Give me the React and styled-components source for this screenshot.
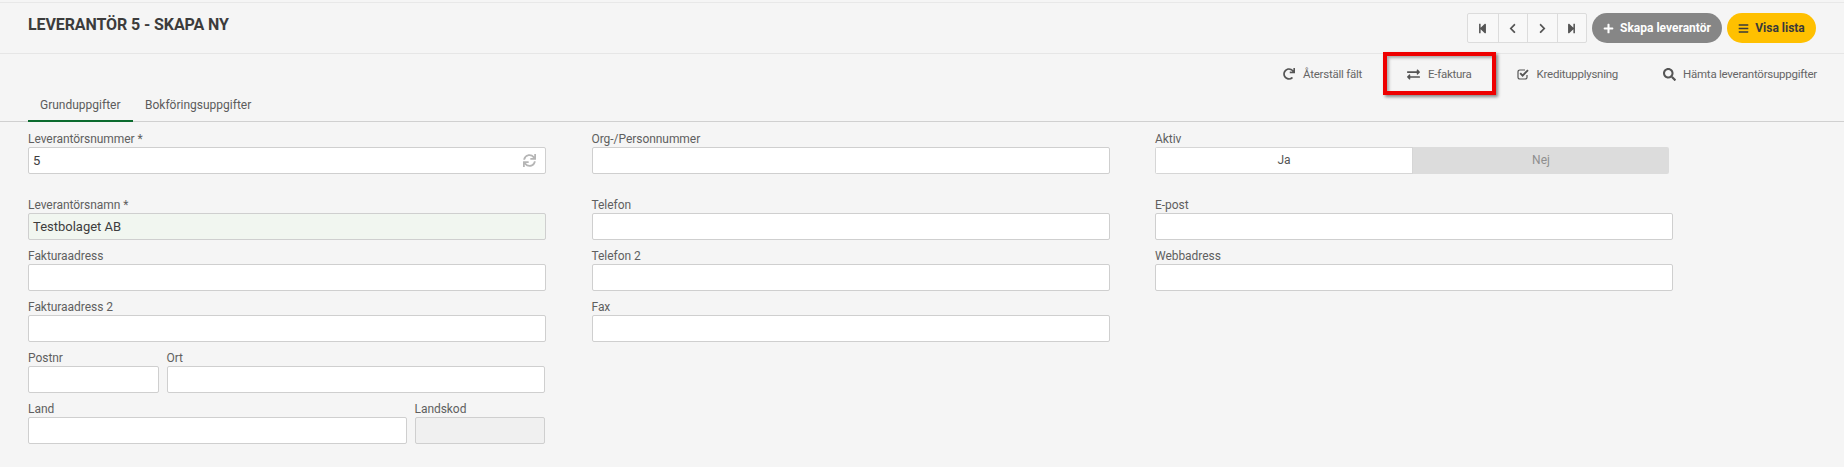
import React from 'react';
import styled, { createGlobalStyle } from 'styled-components';
import {
  FaStepBackward,
  FaStepForward,
  FaChevronLeft,
  FaChevronRight,
  FaPlus,
  FaBars,
  FaRedo,
  FaExchangeAlt,
  FaSearch,
  FaSync,
} from 'react-icons/fa';

const GlobalStyle = createGlobalStyle`
  html, body {
    margin: 0;
    padding: 0;
    background: #f5f5f5;
    font-family: Roboto, "Liberation Sans", sans-serif;
    overflow: hidden;
  }
  * { box-sizing: border-box; }
`;

const Page = styled.div`
  width: 1844px;
  height: 467px;
  padding-top: 2px;
  background: #f5f5f5;
`;

const Header = styled.header`
  height: 52px;
  padding: 10px 28px 0;
  border-top: 1px solid #e8e8e8;
  border-bottom: 1px solid #e6e6e6;
  display: flex;
  justify-content: space-between;
  align-items: flex-start;
`;

const Title = styled.h1`
  margin: 2px 0 0;
  font-size: 16px;
  line-height: 20px;
  font-weight: 700;
  color: #3c3c3c;
  letter-spacing: -0.1px;
`;

const HeaderActions = styled.div`
  display: flex;
  align-items: center;
  gap: 5px;
`;

const Pager = styled.div`
  display: flex;
  height: 30px;
  border: 1px solid #dcdcdc;
  border-radius: 2px;
  background: #f8f8f8;
`;

const PagerButton = styled.button`
  width: 29.5px;
  padding: 0;
  border: 0;
  border-left: ${(p) => (p.$first ? '0' : '1px solid #dcdcdc')};
  background: transparent;
  color: #555;
  font-size: 11px;
  display: flex;
  align-items: center;
  justify-content: center;
`;

const PillButton = styled.button`
  width: ${(p) => p.$width}px;
  height: 30px;
  padding: 0;
  border: 0;
  border-radius: 15px;
  background: ${(p) => p.$bg};
  color: ${(p) => p.$color};
  font-family: inherit;
  font-size: 12px;
  font-weight: 700;
  display: flex;
  align-items: center;
  justify-content: center;
  gap: 6px;
`;

const Toolbar = styled.div`
  height: 40px;
  padding-right: 27px;
  display: flex;
  justify-content: flex-end;
  align-items: center;
  gap: 45px;
`;

const ToolItem = styled.div`
  position: relative;
  display: flex;
  align-items: center;
  gap: ${(p) => p.$gap || 8}px;
  color: #666;
  font-size: 11.5px;
  line-height: 16px;
  letter-spacing: -0.25px;

  svg {
    color: #555;
    font-size: ${(p) => p.$icon || 13}px;
  }
`;

const RedMark = styled.span`
  position: absolute;
  left: -24px;
  top: -14px;
  width: 113px;
  height: 43px;
  border: 4px solid #ee0000;
  box-shadow: 2px 2px 3px rgba(0, 0, 0, 0.45), inset 2px 2px 3px rgba(0, 0, 0, 0.3);
  pointer-events: none;
`;

const Tabs = styled.nav`
  height: 28px;
  padding-left: 28px;
  border-bottom: 1px solid #d0d0d0;
  display: flex;
`;

const Tab = styled.div`
  width: ${(p) => p.$width}px;
  height: 28px;
  padding-left: ${(p) => p.$pad}px;
  font-size: 12px;
  line-height: 22px;
  color: #5c5c5c;
  border-bottom: 2px solid ${(p) => (p.$active ? '#0b6b2e' : 'transparent')};
`;

const Form = styled.main`
  padding: 9px 0 0 28px;
  display: grid;
  grid-template-columns: 518px 518px 518px;
  column-gap: 45.5px;
`;

const Column = styled.div`
  display: flex;
  flex-direction: column;
`;

const Field = styled.div`
  width: ${(p) => (p.$width ? `${p.$width}px` : 'auto')};
  margin-bottom: ${(p) => p.$after ?? 0}px;
`;

const Label = styled.label`
  display: block;
  height: 16px;
  font-size: 12px;
  line-height: 16px;
  color: #5f5f5f;
  letter-spacing: -0.05px;
`;

const InputBox = styled.div`
  position: relative;
  height: 27px;
  padding: 0 4px;
  border: 1px solid #cfcfcf;
  border-radius: 2px;
  background: ${(p) => p.$bg || '#fff'};
  font-size: 13px;
  line-height: 25px;
  color: #3d3d3d;
`;

const InputIcon = styled.span`
  position: absolute;
  right: 9px;
  top: 6px;
  color: #b5b5b5;
  font-size: 13px;
  line-height: 0;
`;

const FieldRow = styled.div`
  display: flex;
  width: 516.5px;
  justify-content: space-between;
  margin-bottom: 8px;
`;

const Toggle = styled.div`
  width: 514px;
  height: 27px;
  display: flex;
  margin-bottom: 23px;
  border-radius: 2px;
  overflow: hidden;
`;

const ToggleOption = styled.div`
  flex: 0 0 ${(p) => p.$width}px;
  text-align: center;
  font-size: 12px;
  background: ${(p) => (p.$on ? '#fff' : '#dcdcdc')};
  color: ${(p) => (p.$on ? '#555' : '#8e8e8e')};
  border: ${(p) => (p.$on ? '1px solid #d6d6d6' : '0')};
  line-height: ${(p) => (p.$on ? 25 : 27)}px;
`;

// fa-check-square-o: open box with the tick running out of it
const CheckSquareIcon = () => (
  <svg width="12" height="12" viewBox="0 0 12 12" fill="none" stroke="currentColor">
    <path d="M10 7v2.2A1.8 1.8 0 0 1 8.2 11H2.8A1.8 1.8 0 0 1 1 9.2V3.8A1.8 1.8 0 0 1 2.8 2H8" strokeWidth="1.2" />
    <path d="M3.2 5.2 5.6 7.6 11 2.2" strokeWidth="1.9" />
  </svg>
);

const App = () => (
  <Page>
    <GlobalStyle />
    <Header>
      <Title>LEVERANTÖR 5 - SKAPA NY</Title>
      <HeaderActions>
        <Pager>
          <PagerButton $first><FaStepBackward /></PagerButton>
          <PagerButton><FaChevronLeft /></PagerButton>
          <PagerButton><FaChevronRight /></PagerButton>
          <PagerButton><FaStepForward /></PagerButton>
        </Pager>
        <PillButton $width={130} $bg="#868686" $color="#fff"><FaPlus size={11} />Skapa leverantör</PillButton>
        <PillButton $width={89} $bg="#ffc000" $color="#3a3a3a"><FaBars size={11} />Visa lista</PillButton>
      </HeaderActions>
    </Header>

    <Toolbar>
      <ToolItem $icon={12}><FaRedo />Återställ fält</ToolItem>
      <ToolItem>
        <RedMark />
        <FaExchangeAlt />E-faktura
      </ToolItem>
      <ToolItem><CheckSquareIcon />Kreditupplysning</ToolItem>
      <ToolItem $gap={7}><FaSearch />Hämta leverantörsuppgifter</ToolItem>
    </Toolbar>

    <Tabs>
      <Tab $active $width={105} $pad={12}>Grunduppgifter</Tab>
      <Tab $width={130} $pad={12}>Bokföringsuppgifter</Tab>
    </Tabs>

    <Form>
      <Column>
        <Field $after={23}>
          <Label>Leverantörsnummer *</Label>
          <InputBox>5<InputIcon><FaSync /></InputIcon></InputBox>
        </Field>
        <Field $after={8}>
          <Label>Leverantörsnamn *</Label>
          <InputBox $bg="#f1f6f0">Testbolaget AB</InputBox>
        </Field>
        <Field $after={8}>
          <Label>Fakturaadress</Label>
          <InputBox />
        </Field>
        <Field $after={8}>
          <Label>Fakturaadress 2</Label>
          <InputBox />
        </Field>
        <FieldRow>
          <Field $width={131}>
            <Label>Postnr</Label>
            <InputBox />
          </Field>
          <Field $width={378}>
            <Label>Ort</Label>
            <InputBox />
          </Field>
        </FieldRow>
        <FieldRow>
          <Field $width={379}>
            <Label>Land</Label>
            <InputBox />
          </Field>
          <Field $width={130}>
            <Label>Landskod</Label>
            <InputBox $bg="#f0f0f0" />
          </Field>
        </FieldRow>
      </Column>

      <Column>
        <Field $after={23}>
          <Label>Org-/Personnummer</Label>
          <InputBox />
        </Field>
        <Field $after={8}>
          <Label>Telefon</Label>
          <InputBox />
        </Field>
        <Field $after={8}>
          <Label>Telefon 2</Label>
          <InputBox />
        </Field>
        <Field>
          <Label>Fax</Label>
          <InputBox />
        </Field>
      </Column>

      <Column>
        <Field>
          <Label>Aktiv</Label>
          <Toggle>
            <ToggleOption $on $width={258}>Ja</ToggleOption>
            <ToggleOption $width={256}>Nej</ToggleOption>
          </Toggle>
        </Field>
        <Field $after={8}>
          <Label>E-post</Label>
          <InputBox />
        </Field>
        <Field>
          <Label>Webbadress</Label>
          <InputBox />
        </Field>
      </Column>
    </Form>
  </Page>
);

export default App;
